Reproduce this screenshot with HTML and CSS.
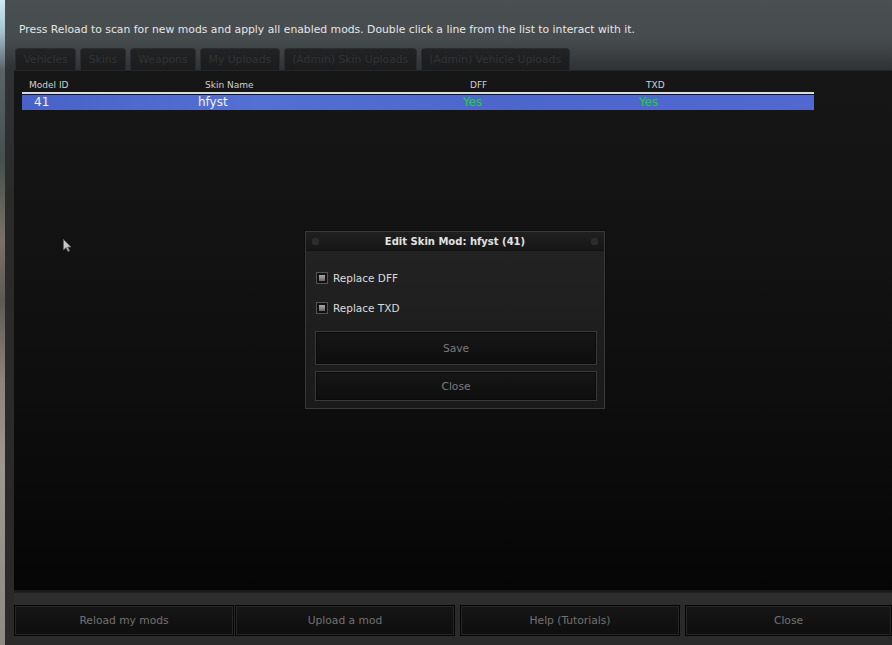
FILE: index.html
```html
<!DOCTYPE html>
<html lang="en">
<head>
    <meta charset="UTF-8">
    <title>Mod Manager</title>
    <link rel="stylesheet" href="styles.css">
</head>
<body>
<div class="scene"></div>
<div class="window">
    <p class="hint">Press Reload to scan for new mods and apply all enabled mods. Double click a line from the list to interact with it.</p>
    <ul class="tabs">
        <li>Vehicles</li>
        <li class="active">Skins</li>
        <li>Weapons</li>
        <li>My Uploads</li>
        <li>(Admin) Skin Uploads</li>
        <li>(Admin) Vehicle Uploads</li>
    </ul>
    <div class="panel">
        <div class="grid">
            <div class="head">
                <span>Model ID</span>
                <span>Skin Name</span>
                <span>DFF</span>
                <span>TXD</span>
            </div>
            <div class="row selected">
                <span class="id">41</span>
                <span>hfyst</span>
                <span class="yes">Yes</span>
                <span class="yes">Yes</span>
            </div>
        </div>
    </div>
    <div class="strip"></div>
    <div class="actions">
        <button class="btn wide">Reload my mods</button>
        <button class="btn wide">Upload a mod</button>
        <button class="btn wide gap">Help (Tutorials)</button>
        <button class="btn last gap">Close</button>
    </div>
</div>

<!-- popup window over the list -->
<div class="dialog">
    <div class="dialog-title">
        <i class="dot"></i>
        <span>Edit Skin Mod: hfyst (41)</span>
        <i class="dot"></i>
    </div>
    <div class="dialog-body">
        <label class="check"><i class="box"></i>Replace DFF</label>
        <label class="check"><i class="box"></i>Replace TXD</label>
        <button class="btn save">Save</button>
        <button class="btn close">Close</button>
    </div>
</div>

<svg class="cursor" width="9" height="13" viewBox="0 0 9 13">
    <path d="M0.5 0.5 L0.5 11 L3 8.5 L5 12.5 L6.5 11.8 L4.6 8 L8 8 Z" fill="#c8c8c8" stroke="#6a6a6a" stroke-width="0.8"/>
</svg>
</body>
</html>
```

FILE: styles.css
```css
* {
    margin: 0;
    padding: 0;
    box-sizing: border-box;
}

body {
    width: 892px;
    height: 645px;
    overflow: hidden;
    display: flex;
    background: #2b2b2b;
    font-family: "DejaVu Sans", Verdana, sans-serif;
    color: #e0e0e0;
    position: relative;
}

ul {
    list-style: none;
}

.scene {
    width: 5px;
    background: linear-gradient(#cfe8f0 0, #a9c6cf 30px, #5a6468 70px, #45504f 160px, #7a7265 240px, #5d5a55 300px, #8c8478 380px, #9e998e 470px, #8e8a82 645px);
}

.window {
    flex: 1;
    display: flex;
    flex-direction: column;
    padding-left: 9px;
    background: linear-gradient(#4a4f52 0, #464b4e 40px, #2f3234 70px, #2a2a2a 200px);
}

.hint {
    font-size: 10.8px;
    padding: 23px 0 0 5px;
    height: 48px;
    color: #e6e6e6;
}

.tabs {
    display: flex;
    height: 22px;
    gap: 4px;
    margin-left: 1px;
}

.tabs li {
    background: linear-gradient(#222324, #1a1b1c);
    border: 1px solid #2b2c2d;
    border-bottom: none;
    border-radius: 4px 4px 0 0;
    padding: 4px 7.5px 0;
    font-size: 10.8px;
    color: #333435;
}

.panel {
    height: 522px;
    background: linear-gradient(#161616 0, #121212 200px, #0b0b0b 400px, #050505 522px);
    border-top: 1px solid #262626;
    border-bottom: 2px solid #1a1a1a;
    padding: 9px 0 0 8px;
}

.grid {
    width: 792px;
    font-size: 12px;
}

.head,
.row {
    display: grid;
    grid-template-columns: 176px 265px 176px 1fr;
}

.head {
    font-size: 9px;
    color: #d0d0d0;
    height: 14px;
    border-bottom: 2px solid #dcdcdc;
}

.head span {
    padding-left: 7px;
}

.row {
    height: 15px;
    margin-top: 1px;
    line-height: 15px;
    color: #f2f2f2;
}

.row.selected {
    background: linear-gradient(90deg, #4a62c8, #5470d4 30%, #4d66cc 60%, #5068d0);
}

.row .id {
    padding-left: 12px;
}

.row .yes {
    color: #20d040;
}

.strip {
    height: 12px;
    background: #2d2d2d;
    border-top: 1px solid #222;
}

.actions {
    display: flex;
    height: 33px;
    padding-top: 1px;
}

.btn {
    font-family: "DejaVu Sans", Verdana, sans-serif;
    font-size: 10.7px;
    color: #727272;
    background: linear-gradient(#161616, #0e0e0e);
    border: 1px solid #050505;
    box-shadow: inset 0 0 0 1px #262626;
}

.actions .btn {
    height: 31px;
}

.actions .wide {
    width: 220px;
    margin-right: 1px;
}

.actions .gap {
    margin-left: 4px;
}

.actions .last {
    flex: 1;
}

.dialog {
    position: absolute;
    left: 305px;
    top: 231px;
    width: 300px;
    height: 178px;
    border: 1px solid #3a3a3a;
    background: linear-gradient(#232323, #1a1a1a);
    box-shadow: 0 0 0 1px #0c0c0c;
}

.dialog-title {
    height: 19px;
    display: flex;
    align-items: center;
    justify-content: space-between;
    padding: 0 6px;
    background: linear-gradient(#1f1f1f, #171717);
    border-bottom: 1px solid #111;
    font-size: 10px;
    font-weight: bold;
    color: #e2e2e2;
}

.dot {
    width: 7px;
    height: 7px;
    border-radius: 50%;
    background: #2c2c2c;
    box-shadow: inset 0 0 1px #444;
}

.dialog-body {
    padding: 20px 8px 0 9px;
    display: flex;
    flex-direction: column;
}

.check {
    display: flex;
    align-items: center;
    height: 13px;
    margin-bottom: 17px;
    font-size: 10.5px;
    color: #dcdcdc;
}

.box {
    width: 12px;
    height: 12px;
    border: 1px solid #545454;
    background: #111;
    margin: 0 5px 0 1px;
    display: flex;
    align-items: center;
    justify-content: center;
}

.box::after {
    content: "";
    width: 6px;
    height: 6px;
    background: linear-gradient(#aaa, #666);
}

.dialog .btn {
    width: 282px;
    color: #7a7a7a;
    border: 1px solid #3a3a3a;
    box-shadow: inset 0 0 0 1px #0a0a0a;
}

.save {
    height: 34px;
    margin-top: 0;
}

.close {
    height: 30px;
    margin-top: 6px;
}

.cursor {
    position: absolute;
    left: 63px;
    top: 239px;
}
```
